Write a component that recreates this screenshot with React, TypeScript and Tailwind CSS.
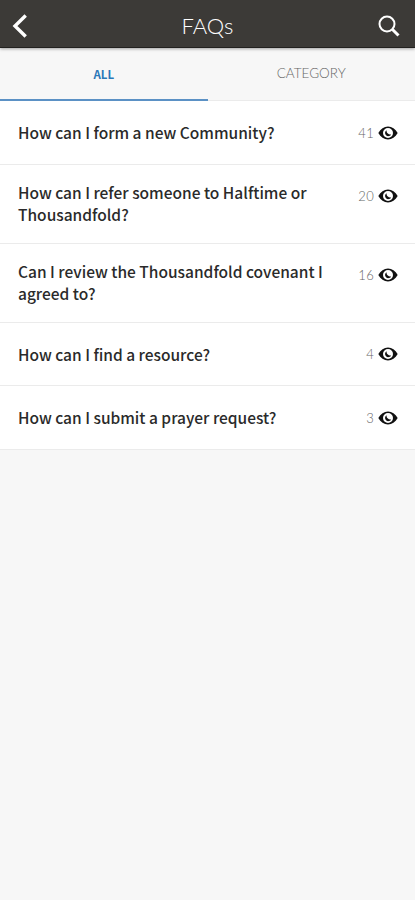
interface Faq {
  id: number;
  lines: string[];
  views: number;
}

const FAQS: Faq[] = [
  { id: 1, lines: ['How can I form a new Community?'], views: 41 },
  { id: 2, lines: ['How can I refer someone to Halftime or', 'Thousandfold?'], views: 20 },
  { id: 3, lines: ['Can I review the Thousandfold covenant I', 'agreed to?'], views: 16 },
  { id: 4, lines: ['How can I find a resource?'], views: 4 },
  { id: 5, lines: ['How can I submit a prayer request?'], views: 3 },
];

function EyeIcon() {
  return (
    <svg width="20" height="14" viewBox="0 0 20 14" aria-hidden="true">
      <path
        fillRule="evenodd"
        fill="#111"
        d="M.3 7C2.700 3 6 .6 10 .6S17.300 3 19.700 7c-2.400 4-5.700 6.400-9.700 6.400S2.700 11 .3 7ZM10 2a5 5 0 1 0 0 10 5 5 0 0 0 0-10Z"
      />
      <path fill="#111" d="M8.600 4.200a3.200 3.200 0 1 0 4.500 4.200c-1.200.4-2.300.1-3.200-.8-.9-.9-1.500-2-1.300-3.400Z" />
    </svg>
  );
}

function FaqRow({ faq }: { faq: Faq }) {
  return (
    <li
      className={`flex items-start justify-between border-b border-[#ebebeb] bg-white pl-[18px] pr-[17px] ${
        faq.lines.length > 1 ? 'h-[79px] pt-4' : 'h-[63.700px] pt-5'
      }`}
    >
      <p className="whitespace-nowrap font-['Noto_Sans_CJK_SC','Noto_Sans',sans-serif] text-[15.5px] font-medium leading-[22px] text-[#2a2a2a]">
        {faq.lines.map((line) => (
          <span key={line} className="block">
            {line}
          </span>
        ))}
      </p>
      <div className={`flex items-center gap-1 ${faq.lines.length > 1 ? 'mt-1' : 'mt-[0.5px]'}`}>
        <span className="font-[Lato,sans-serif] text-[13px] font-light leading-[22px] tracking-[0.3px] text-[#666]">
          {faq.views}
        </span>
        <EyeIcon />
      </div>
    </li>
  );
}

export default function App() {
  return (
    <div className="flex h-[900px] w-[415px] flex-col overflow-hidden bg-[#f7f7f7]">
      <header className="z-10 flex h-12 shrink-0 items-center border-b border-[#22211f] bg-[#3c3a37] pl-3 pr-[15px] pt-1 text-white shadow-[0_1px_3px_rgba(0,0,0,0.35)]">
        <button type="button" aria-label="Back" className="flex flex-1 justify-start">
          <svg width="16" height="24" viewBox="0 0 16 24" fill="none" stroke="#fff" strokeWidth="3.400">
            <path d="M13.700 1.500 3 12l10.700 10.500" />
          </svg>
        </button>
        <h1 className="pl-[3px] font-[Lato,sans-serif] text-[22px] font-light leading-7">FAQs</h1>
        <button type="button" aria-label="Search" className="flex flex-1 justify-end">
          <svg width="22" height="22" viewBox="0 0 22 22" fill="none" stroke="#fff">
            <circle cx="9" cy="9" r="7.500" strokeWidth="2" />
            <path d="m14.500 14.500 6 6" strokeWidth="3" />
          </svg>
        </button>
      </header>

      <nav className="flex h-[53px] shrink-0">
        <button
          type="button"
          className="flex-1 border-b-2 border-[#5b91c5] pt-0.5 font-['Noto_Sans_CJK_SC','Noto_Sans',sans-serif] text-[11.5px] font-bold text-[#2b78b8]"
        >
          ALL
        </button>
        <button
          type="button"
          className="flex-1 border-b border-[#ebebeb] pb-0.5 font-[Lato,sans-serif] text-[13.5px] font-light text-[#666]"
        >
          CATEGORY
        </button>
      </nav>

      <ul>
        {FAQS.map((faq) => (
          <FaqRow key={faq.id} faq={faq} />
        ))}
      </ul>
    </div>
  );
}
